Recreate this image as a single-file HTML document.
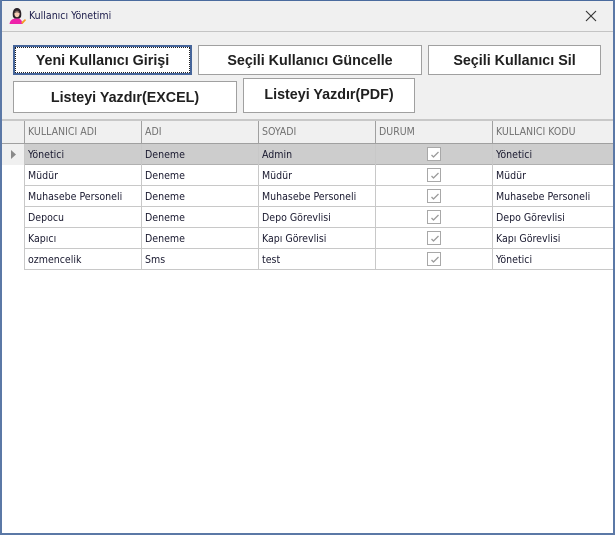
<!DOCTYPE html>
<html lang="tr">
<head>
<meta charset="utf-8">
<title>Kullanıcı Yönetimi</title>
<style>
html,body{margin:0;padding:0;background:#f0f0f0}
body{width:615px;height:535px;position:relative;overflow:hidden;font-family:"DejaVu Sans Condensed","Liberation Sans",sans-serif}
.abs{position:absolute}
.btn{position:absolute;box-sizing:border-box;background:#fff;border:1px solid #a0a0a0;padding-top:2px;font:bold 14.3px/1 "Liberation Sans",sans-serif;color:#202020;display:flex;align-items:center;justify-content:center;white-space:nowrap}
.t{position:absolute;font:10.5px/21px "DejaVu Sans Condensed","Liberation Sans",sans-serif;color:#1a1a30;white-space:nowrap}
.h{color:#707070}
.hl{position:absolute;left:24px;width:589px;height:1px;background:#c8c8c8}
.vl{position:absolute;width:1px;background:#c8c8c8;top:144px;height:126px}
.vh{position:absolute;width:1px;background:#a0a0a0;top:121px;height:23px}
.cb{position:absolute;left:427px;width:14px;height:14px;box-sizing:border-box;border:1px solid #a8a8a8;background:#fff}
.cb svg{position:absolute;left:1px;top:1px}
</style>
</head>
<body>
<!-- grid area -->
<div class="abs" style="left:2px;top:120px;width:611px;height:413px;background:#fff"></div>
<div class="abs" style="left:2px;top:31px;width:611px;height:1px;background:#c4c4c4"></div>
<div class="abs" style="left:2px;top:119px;width:611px;height:2px;background:#c8c8c8"></div>
<div class="abs" style="left:2px;top:121px;width:611px;height:22px;background:#f0f0f0"></div>
<div class="abs" style="left:2px;top:143px;width:611px;height:1px;background:#a0a0a0"></div>
<div class="abs" style="left:2px;top:144px;width:22px;height:21px;background:#f0f0f0"></div>
<div class="abs" style="left:25px;top:144px;width:588px;height:21px;background:#cdcdcd"></div>

<div class="hl" style="top:185px"></div>
<div class="hl" style="top:206px"></div>
<div class="hl" style="top:227px"></div>
<div class="hl" style="top:248px"></div>
<div class="hl" style="top:269px"></div>
<div class="hl" style="top:164px;background:#b0b0b0"></div>

<div class="vl" style="left:24px"></div>
<div class="vl" style="left:141px"></div>
<div class="vl" style="left:258px"></div>
<div class="vl" style="left:375px"></div>
<div class="vl" style="left:492px"></div>
<div class="vh" style="left:24px"></div>
<div class="vh" style="left:141px"></div>
<div class="vh" style="left:258px"></div>
<div class="vh" style="left:375px"></div>
<div class="vh" style="left:492px"></div>

<svg class="abs" style="left:10px;top:149px" width="7" height="11"><path d="M1 1L6 5.5L1 10Z" fill="#8a8a8a"/></svg>

<!-- window frame -->
<div class="abs" style="left:0;top:0;width:615px;height:1px;background:#4a6b9e"></div>
<div class="abs" style="left:0;top:0;width:2px;height:535px;background:#5b78a6"></div>
<div class="abs" style="right:0;top:0;width:2px;height:535px;background:#5b78a6"></div>
<div class="abs" style="left:0;bottom:0;width:615px;height:2px;background:#5b78a6"></div>

<!-- title icon -->
<svg class="abs" style="left:8px;top:7px" width="18" height="18" viewBox="0 0 18 18">
<path d="M1.5 17C2 13 4.5 11.5 9 11.5C12.5 11.5 14 13 14.5 17Z" fill="#ee22aa"/>
<path d="M5 10C4 5 5.5 1 9 1C12.5 1 14 5 13 10L11.5 11.5H6.5Z" fill="#2a2228"/>
<ellipse cx="9" cy="7" rx="2.6" ry="3.2" fill="#f6cdb4"/>
<path d="M6.4 6C7 3.8 11 3.8 11.6 6C10 5 8 5 6.4 6Z" fill="#2a2228"/>
<path d="M13 15.5L17 12L18 13.2L14.5 17Z" fill="#f39a26"/>
</svg>
<div class="abs" style="left:29px;top:8px;font:10.5px/16px 'DejaVu Sans Condensed','Liberation Sans',sans-serif;color:#1c1c4a;white-space:nowrap">Kullanıcı Yönetimi</div>
<svg class="abs" style="left:585px;top:10px" width="12" height="12"><path d="M1 1L11 11M11 1L1 11" stroke="#333" stroke-width="1.1" fill="none"/></svg>

<!-- buttons -->
<div class="btn" style="left:13px;top:45px;width:179px;height:30px;border:2px solid #46659a;outline:1px dotted #222;outline-offset:-3px">Yeni Kullanıcı Girişi</div>
<div class="btn" style="left:198px;top:45px;width:224px;height:30px">Seçili Kullanıcı Güncelle</div>
<div class="btn" style="left:428px;top:45px;width:173px;height:30px">Seçili Kullanıcı Sil</div>
<div class="btn" style="left:13px;top:81px;width:224px;height:32px">Listeyi Yazdır(EXCEL)</div>
<div class="btn" style="left:243px;top:78px;width:172px;height:35px;padding-top:0">Listeyi Yazdır(PDF)</div>

<!-- header -->
<div class="t h" style="left:28px;top:122px">KULLANICI ADI</div>
<div class="t h" style="left:145px;top:122px">ADI</div>
<div class="t h" style="left:262px;top:122px">SOYADI</div>
<div class="t h" style="left:379px;top:122px">DURUM</div>
<div class="t h" style="left:496px;top:122px">KULLANICI KODU</div>

<!-- rows -->
<div class="t" style="left:28px;top:145px">Yönetici</div><div class="t" style="left:145px;top:145px">Deneme</div><div class="t" style="left:262px;top:145px">Admin</div><div class="t" style="left:496px;top:145px">Yönetici</div>
<div class="t" style="left:28px;top:166px">Müdür</div><div class="t" style="left:145px;top:166px">Deneme</div><div class="t" style="left:262px;top:166px">Müdür</div><div class="t" style="left:496px;top:166px">Müdür</div>
<div class="t" style="left:28px;top:187px">Muhasebe Personeli</div><div class="t" style="left:145px;top:187px">Deneme</div><div class="t" style="left:262px;top:187px">Muhasebe Personeli</div><div class="t" style="left:496px;top:187px">Muhasebe Personeli</div>
<div class="t" style="left:28px;top:208px">Depocu</div><div class="t" style="left:145px;top:208px">Deneme</div><div class="t" style="left:262px;top:208px">Depo Görevlisi</div><div class="t" style="left:496px;top:208px">Depo Görevlisi</div>
<div class="t" style="left:28px;top:229px">Kapıcı</div><div class="t" style="left:145px;top:229px">Deneme</div><div class="t" style="left:262px;top:229px">Kapı Görevlisi</div><div class="t" style="left:496px;top:229px">Kapı Görevlisi</div>
<div class="t" style="left:28px;top:250px">ozmencelik</div><div class="t" style="left:145px;top:250px">Sms</div><div class="t" style="left:262px;top:250px">test</div><div class="t" style="left:496px;top:250px">Yönetici</div>

<!-- checkboxes -->
<div class="cb" style="top:147px"><svg width="12" height="12"><path d="M2.5 6L4.5 8L9.5 3" stroke="#9a9a9a" stroke-width="1.3" fill="none"/></svg></div>
<div class="cb" style="top:168px"><svg width="12" height="12"><path d="M2.5 6L4.5 8L9.5 3" stroke="#9a9a9a" stroke-width="1.3" fill="none"/></svg></div>
<div class="cb" style="top:189px"><svg width="12" height="12"><path d="M2.5 6L4.5 8L9.5 3" stroke="#9a9a9a" stroke-width="1.3" fill="none"/></svg></div>
<div class="cb" style="top:210px"><svg width="12" height="12"><path d="M2.5 6L4.5 8L9.5 3" stroke="#9a9a9a" stroke-width="1.3" fill="none"/></svg></div>
<div class="cb" style="top:231px"><svg width="12" height="12"><path d="M2.5 6L4.5 8L9.5 3" stroke="#9a9a9a" stroke-width="1.3" fill="none"/></svg></div>
<div class="cb" style="top:252px"><svg width="12" height="12"><path d="M2.5 6L4.5 8L9.5 3" stroke="#9a9a9a" stroke-width="1.3" fill="none"/></svg></div>
</body>
</html>
